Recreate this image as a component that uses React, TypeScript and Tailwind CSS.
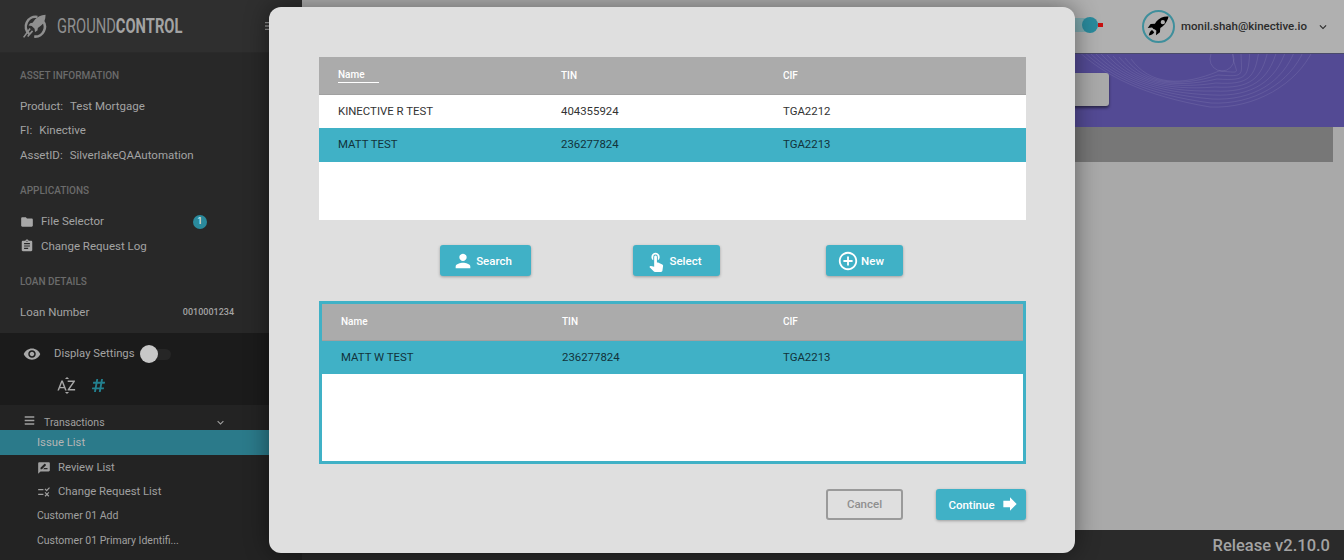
import React from "react";
import { FaBars, FaHashtag } from "react-icons/fa";
import {
  MdAddCircleOutline,
  MdAssignment,
  MdExpandMore,
  MdFolder,
  MdForward,
  MdMenu,
  MdPerson,
  MdRateReview,
  MdRule,
  MdSortByAlpha,
  MdTouchApp,
  MdVisibility,
} from "react-icons/md";

function RocketMark({ className, color }: { className?: string; color: string }) {
  return (
    <svg viewBox="0 0 32 32" className={className}>
      <path
        fill={color}
        fillRule="evenodd"
        d="M30 2c-7-.5-13 2-17 7l-2 3-6 .5-4 5.500 6-.5 2 2 2 .5 2 2-.5 6 5.500-4 .5-6 3-2c5-4 7.500-10 8.500-14zm-8 5a3 3 0 1 1 0 6 3 3 0 0 1 0-6z"
      />
      <path fill={color} d="M7 21c-2 1-3.500 3-4.500 7.500 4.500-1 6.500-2.500 7.500-4.500z" />
    </svg>
  );
}

function LogoMark() {
  return (
    <svg viewBox="0 0 32 32" className="w-[26px] h-[28px]" fill="none">
      <path d="M9 26A12 12 0 0 1 19 5" stroke="#8f8f8f" strokeWidth="3.200" />
      <path d="M25 9a12 12 0 0 1-10 20" stroke="#8f8f8f" strokeWidth="3.200" />
      <path
        fill="#8f8f8f"
        d="M29 2c-6 .5-10 2.500-13 6l-3 4-3 .5-2 3 4 .5 3.500 3.500.5 4 3-2 .5-3 4-3c3.500-3 5.500-7.500 5.500-13.500z"
      />
      <path stroke="#8f8f8f" strokeWidth="2" d="M10 19 2 30M13 22l-6 7" />
    </svg>
  );
}

function SectionLabel({ children, className = "" }: { children: React.ReactNode; className?: string }) {
  return (
    <div className={`h-[14px] leading-[14px] text-[10px] font-medium text-[#6b6b6b] ${className}`}>
      {children}
    </div>
  );
}

function Field({ label, value }: { label: string; value: string }) {
  return (
    <div className="h-[24.5px] flex items-center gap-[7px] text-[11.5px] text-[#a3a3a3]">
      <span>{label}</span>
      <span>{value}</span>
    </div>
  );
}

function TealButton({ className = "", children }: { className?: string; children: React.ReactNode }) {
  return (
    <button className={`h-[31px] rounded-[3px] bg-[#40b1c6] text-white text-[11.5px] font-medium flex items-center justify-center shadow-[0_1px_3px_rgba(0,0,0,0.3)] ${className}`}>
      {children}
    </button>
  );
}

function Contours() {
  const arcs = Array.from({ length: 10 }, (_, i) => i);
  return (
    <svg viewBox="0 0 269 73" className="absolute right-0 top-0 w-[269px] h-[73px]" fill="none" stroke="#ffffff" strokeOpacity="0.09">
      <circle cx="147" cy="5" r="12" />
      {arcs.map((i) => (
        <path
          key={i}
          d={`M${2 + i * 6} ${-4 + i} C ${30 + i * 5} ${22 + i}, ${70 + i * 4} ${42 - i}, ${135 + i} ${53 - i * 4} C ${180 - i} ${55 - i * 4}, ${222 - i * 7} ${30 - i}, ${238 - i * 9} -4`}
        />
      ))}
    </svg>
  );
}

export default function App() {
  return (
    <div className="relative w-[1344px] h-[560px] overflow-hidden flex bg-[#a9a9a9] font-['Roboto',sans-serif]">
      {/* sidebar */}
      <aside className="w-[302px] shrink-0 h-full flex flex-col bg-[#2a2a2a]">
        <div className="h-[53px] shrink-0 bg-[#2f2f2f] flex items-center pl-[22px] border-b border-[#2a2a2a]">
          <LogoMark />
          <div className="ml-[9px] w-[125px] shrink-0 text-[20px] leading-none text-[#8f8f8f] whitespace-nowrap origin-left scale-x-[0.735]">
            GROUND<span className="font-bold text-[#a3a3a3]">CONTROL</span>
          </div>
          <MdMenu className="ml-[81px] text-[#8f8f8f] w-4 h-4" />
        </div>

        <div className="h-[280px] shrink-0 pt-[16px] px-5 bg-[#282828]">
          <SectionLabel>ASSET INFORMATION</SectionLabel>
          <div className="mt-[11px]">
            <Field label="Product:" value="Test Mortgage" />
            <Field label="FI:" value="Kinective" />
            <Field label="AssetID:" value="SilverlakeQAAutomation" />
          </div>
          <SectionLabel className="mt-4">APPLICATIONS</SectionLabel>
          <div className="mt-3 text-[11.5px] text-[#a3a3a3]">
            <div className="h-[24.5px] flex items-center">
              <MdFolder className="w-[14px] h-[14px] text-[#a8a8a8]" />
              <span className="ml-[7px]">File Selector</span>
              <span className="ml-[89px] w-[14px] h-[14px] rounded-full bg-[#2a8a9c] text-white text-[9px] flex items-center justify-center">1</span>
            </div>
            <div className="h-[24.5px] flex items-center">
              <MdAssignment className="w-[14px] h-[14px] text-[#a8a8a8]" />
              <span className="ml-[7px]">Change Request Log</span>
            </div>
          </div>
          <SectionLabel className="mt-4">LOAN DETAILS</SectionLabel>
          <div className="mt-3 h-6 w-[214px] flex items-center justify-between text-[11.5px] text-[#a3a3a3]">
            <span>Loan Number</span>
            <span className="text-[9px] font-medium">0010001234</span>
          </div>
        </div>

        <div className="h-[72px] shrink-0 bg-[#1b1b1b] pl-[23px]">
          <div className="h-[42px] flex items-center text-[#a3a3a3] text-[11.3px]">
            <MdVisibility className="w-[18px] h-[18px] text-[#a8a8a8]" />
            <span className="ml-[13px] pt-[1px]">Display Settings</span>
            <span className="relative ml-[6px] w-[30px] h-[11px] rounded-full bg-[#262626]">
              <span className="absolute -left-[1px] -top-[4px] w-[18px] h-[18px] rounded-full bg-[#c8c8c8]" />
            </span>
          </div>
          <div className="pl-[33px] flex items-center gap-[14px]">
            <MdSortByAlpha className="w-[21px] h-[21px] text-[#a8a8a8]" />
            <FaHashtag className="w-[15px] h-[15px] text-[#23808f]" />
          </div>
        </div>

        <div className="flex-1 bg-[#232323] text-[11.3px] text-[#a0a0a0]">
          <div className="h-[25px] pt-[10px] w-[269px] pl-6 pr-[42px] flex items-center text-[10.5px]">
            <FaBars className="w-[11px] h-[11px] -mt-[5px]" />
            <span className="ml-[9px]">Transactions</span>
            <MdExpandMore className="ml-auto w-[13px] h-[13px]" />
          </div>
          <div className="h-[25px] pt-[1px] bg-[#2b7a8a] flex items-center pl-[37px] text-[#b5b5b5]">Issue List</div>
          <div className="h-[24.5px] pt-[2px] flex items-center pl-[37px]">
            <MdRateReview className="w-[14px] h-[14px]" />
            <span className="ml-[7px]">Review List</span>
          </div>
          <div className="h-[24.5px] pt-[1px] flex items-center pl-[37px]">
            <MdRule className="w-[14px] h-[14px]" />
            <span className="ml-[7px]">Change Request List</span>
          </div>
          <div className="h-[24.5px] flex items-center pl-[37px] text-[10.5px]">Customer 01 Add</div>
          <div className="h-[24.5px] flex items-center pl-[37px] text-[10.5px]">Customer 01 Primary Identifi...</div>
        </div>
      </aside>

      {/* page behind the dialog */}
      <main className="flex-1 min-w-0 h-full flex flex-col">
        <header className="h-[53px] shrink-0 bg-[#b0b0b0] flex items-center">
          <div className="relative ml-[765px] -mt-[3px] w-[26px] h-[14px] rounded-r-full bg-[#7fa9ae]">
            <span className="absolute -right-[5px] -top-[1px] w-4 h-4 rounded-full bg-[#2a8a9c]" />
            <span className="absolute -right-[10px] top-[5px] w-[5px] h-[4px] bg-[#c80f0f]" />
          </div>
          <div className="ml-[49px] w-[33px] h-[33px] rounded-full border-2 border-[#3f8f9c] flex items-center justify-center">
            <RocketMark color="#000000" className="w-[23px] h-[23px]" />
          </div>
          <span className="ml-[6px] text-[11.5px] font-medium text-[#2b2b2b]">monil.shah@kinective.io</span>
          <MdExpandMore className="ml-[9px] w-[14px] h-[14px] text-[#2b2b2b]" />
        </header>
        <div className="relative h-[74px] shrink-0 bg-[#534a94] border-t border-[#4a4a6a] pt-[19px]">
          <Contours />
          <div className="relative ml-[687px] w-[120px] h-[33px] rounded-[3px] bg-[#a9a9a9] shadow-[0_2px_3px_rgba(0,0,0,0.5)]" />
        </div>
        <div className="h-[35px] shrink-0 mr-[11px] bg-[#777777]" />
        <div className="flex-1" />
        <footer className="h-[30px] shrink-0 pt-[3px] bg-[#2a2a2a] flex items-center justify-end pr-[14px] text-[#a3a3a3] text-[16.5px] font-medium">
          Release v2.10.0
        </footer>
      </main>

      {/* dialog */}
      <div className="absolute left-[269px] top-[7px] w-[806px] h-[546px] rounded-xl bg-[#dfdfdf] pl-[50px] pr-[49px] pt-[50px] shadow-[0_0_24px_rgba(0,0,0,0.45)]">
        <div className="h-[163px] bg-white text-[11.4px] text-[#333333]">
          <div className="relative h-[38px] bg-[#ababab] border-b border-[#a0a0a0] flex items-center pl-[19px] text-[10px] font-medium text-white">
            <span className="w-[223px] -mt-[2px]">Name</span>
            <span className="w-[222px]">TIN</span>
            <span>CIF</span>
            <span className="absolute left-[19px] top-[25px] w-[41px] h-px bg-white" />
          </div>
          <div className="h-[33px] flex items-center pl-[19px]">
            <span className="w-[223px]">KINECTIVE R TEST</span>
            <span className="w-[222px]">404355924</span>
            <span>TGA2212</span>
          </div>
          <div className="h-[34px] flex items-center pl-[19px] bg-[#40b1c6] text-[#12333b]">
            <span className="w-[223px]">MATT TEST</span>
            <span className="w-[222px]">236277824</span>
            <span>TGA2213</span>
          </div>
        </div>

        <div className="mt-[25px] pl-[121px] flex">
          <TealButton className="w-[91px] pr-[7px]">
            <MdPerson className="w-[22px] h-[22px] mr-[2px]" />
            <span className="pt-[2px]">Search</span>
          </TealButton>
          <TealButton className="w-[87px] ml-[102px] pr-[6px]">
            <MdTouchApp className="w-[22px] h-[22px] mr-[2px]" />
            <span className="pt-[2px]">Select</span>
          </TealButton>
          <TealButton className="w-[77px] ml-[106px] pr-[8px]">
            <MdAddCircleOutline className="w-[22px] h-[22px] mr-[2px]" />
            <span className="pt-[2px]">New</span>
          </TealButton>
        </div>

        <div className="mt-[25px] h-[163px] border-[3px] border-[#40b1c6] bg-white text-[11.4px] text-[#12333b]">
          <div className="h-[37px] pb-[2px] bg-[#ababab] border-b border-[#a0a0a0] flex items-center pl-[19px] text-[10px] font-medium text-white">
            <span className="w-[221px]">Name</span>
            <span className="w-[221px]">TIN</span>
            <span>CIF</span>
          </div>
          <div className="h-[33px] bg-[#40b1c6] flex items-center pl-[19px]">
            <span className="w-[221px]">MATT W TEST</span>
            <span className="w-[221px]">236277824</span>
            <span>TGA2213</span>
          </div>
        </div>

        <div className="mt-[25px] flex justify-end items-start gap-[33px]">
          <button className="w-[77px] h-[31px] rounded-[3px] border-2 border-[#9a9a9a] text-[11.5px] font-medium text-[#8f8f8f]">
            Cancel
          </button>
          <TealButton className="w-[90px] pl-[6px]">
            <span className="pt-[3px]">Continue</span>
            <MdForward className="ml-[5px] w-[20px] h-[20px] -mt-[1px]" />
          </TealButton>
        </div>
      </div>
    </div>
  );
}
